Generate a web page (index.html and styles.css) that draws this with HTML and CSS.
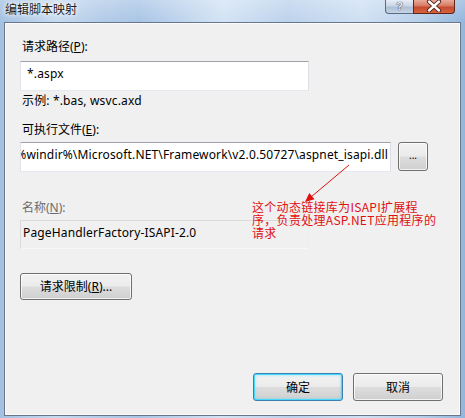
FILE: index.html
```html
<!DOCTYPE html>
<html>
<head>
<meta charset="utf-8">
<link rel="stylesheet" href="styles.css">
</head>
<body>
<div class="window">
  <div class="titlebar">
    <span class="title">编辑脚本映射</span>
    <div class="caption-btns">
      <div class="cap-help">?</div>
      <div class="cap-close">
        <svg width="16" height="12" viewBox="0 0 16 12">
          <path d="M3 1.5 L13 10.5 M13 1.5 L3 10.5" stroke="#4a1a12" stroke-width="4.2" stroke-linecap="round"/>
          <path d="M3 1.5 L13 10.5 M13 1.5 L3 10.5" stroke="#ffffff" stroke-width="2.4" stroke-linecap="round"/>
        </svg>
      </div>
    </div>
  </div>
  <div class="client">
    <div class="label l1">请求路径(<u>P</u>):</div>
    <div class="field f1"><span>*.aspx</span></div>
    <div class="hint">示例: *.bas, wsvc.axd</div>
    <div class="label l2">可执行文件(<u>E</u>):</div>
    <div class="exe-row">
      <div class="field f2"><span>%windir%\Microsoft.NET\Framework\v2.0.50727\aspnet_isapi.dll</span></div>
      <div class="btn browse">...</div>
    </div>
    <div class="label l3 disabled">名称(<u>N</u>):</div>
    <div class="field f3 readonly"><span>PageHandlerFactory-ISAPI-2.0</span></div>
    <div class="btn restrict">请求限制(<u>R</u>)...</div>
    <div class="footer">
      <div class="btn default">确定</div>
      <div class="btn">取消</div>
    </div>
    <div class="note">这个动态链接库为ISAPI扩展程<br>序，负责处理ASP.NET应用程序的<br>请求</div>
  </div>
  <svg class="arrow" width="465" height="418" viewBox="0 0 465 418">
    <line x1="349" y1="165" x2="311" y2="197" stroke="#e01010" stroke-width="1"/>
    <polygon points="305,202 314.5,199.3 309.3,193.1" fill="#e01010"/>
  </svg>
</div>
</body>
</html>
```

FILE: styles.css
```css
html, body {
  margin: 0;
  padding: 0;
}
body {
  width: 465px;
  height: 418px;
  overflow: hidden;
  font-family: "Noto Sans", "Noto Sans CJK SC", sans-serif;
  font-size: 12px;
  color: #000;
}
.window {
  position: relative;
  width: 465px;
  height: 418px;
  display: flex;
  flex-direction: column;
  box-sizing: border-box;
  background:
    linear-gradient(180deg, rgba(255,255,255,0.25) 0px, rgba(255,255,255,0) 22px),
    linear-gradient(90deg, #a3c0e2 0%, #c6daef 12%, #b2cbe8 22%, #a9c5e6 30%, #d3e3f4 48%, #bcd2ec 62%, #cfe0f3 78%, #b7cfea 90%, #93b6dd 100%);
}
.titlebar {
  height: 22px;
  display: flex;
  justify-content: space-between;
  align-items: flex-start;
  padding-left: 5px;
  flex: none;
}
.title {
  font-family: "Noto Sans CJK SC", sans-serif;
  font-size: 12px;
  line-height: 16px;
  margin-top: 1px;
  color: #1b1b1b;
  text-shadow: 0 0 6px #fff, 0 0 3px #fff;
}
.caption-btns {
  display: flex;
  margin-right: 10px;
}
.cap-help {
  width: 28px;
  height: 14px;
  box-sizing: border-box;
  border: 1px solid #5a6b80;
  border-top: none;
  border-right: none;
  border-radius: 0 0 0 4px;
  background: linear-gradient(180deg, #e6edf6 0%, #c9d6e6 45%, #aebfd5 55%, #c6d4e6 100%);
  font-family: "Liberation Sans", sans-serif;
  font-size: 11px;
  font-weight: bold;
  line-height: 12px;
  text-align: center;
  color: #eef3fa;
  text-shadow: 0 0 1px #334, 0 0 1px #334;
}
.cap-close {
  width: 42px;
  height: 14px;
  box-sizing: border-box;
  border: 1px solid #5e2419;
  border-top: none;
  border-radius: 0 0 4px 0;
  background: linear-gradient(180deg, #eaa99a 0%, #d77a62 45%, #c64a30 55%, #d5643f 100%);
  display: flex;
  justify-content: center;
  align-items: flex-start;
}
.cap-close svg {
  display: block;
  margin-top: 0;
}
.client {
  position: relative;
  flex: 1;
  margin: 0 4px 2px 4px;
  border: 1px solid #68788a;
  background: #f0f0f0;
  box-shadow: inset 0 0 0 1px #fafafa;
  padding: 0 17px 0 15px;
  display: flex;
  flex-direction: column;
  align-items: flex-start;
}
.label, .hint {
  font-family: "Noto Sans", "Noto Sans CJK SC", sans-serif;
  line-height: 16px;
  padding-left: 2px;
}
.hint { letter-spacing: 0.15px; }
.l1 { margin-top: 16px; }
.hint { margin-top: 2px; }
.l2 { margin-top: 13px; }
.l3 { margin-top: 28px; }
.disabled { color: #6d6d6d; }
.field {
  box-sizing: border-box;
  height: 30px;
  width: 289px;
  background: #fff;
  border: 1px solid #abadb3;
  border-top-color: #9fa2aa;
  border-bottom-color: #e3e9ef;
  border-right-color: #dbdfe6;
  border-left-color: #e2e3ea;
  display: flex;
  align-items: flex-start;
  overflow: hidden;
  white-space: nowrap;
  line-height: 16px;
  letter-spacing: 0.15px;
  padding: 4px 6px 0 6px;
}
.f1 { margin-top: 6px; }
.exe-row {
  display: flex;
  align-items: flex-start;
  gap: 7px;
  margin-top: 4px;
}
.f2 {
  width: 371px;
  justify-content: flex-end;
  padding: 4px 2px 0 0;
}
.f2 span { flex: none; }
.f3 {
  margin-top: 4px;
  height: 29px;
}
.readonly {
  background: #f0f0f0;
  border: 1px solid #dadada;
  border-bottom-color: #f7f7f7;
  border-right-color: #ededed;
  padding-left: 2px;
}
.btn {
  box-sizing: border-box;
  border: 1px solid #707070;
  border-radius: 3px;
  background: linear-gradient(180deg, #f2f2f2 0%, #ebebeb 48%, #dddddd 52%, #cfcfcf 100%);
  box-shadow: inset 0 0 0 1px rgba(255,255,255,0.75);
  display: flex;
  justify-content: center;
  align-items: center;
  font-family: "Noto Sans CJK SC", "Noto Sans", sans-serif;
  font-size: 12px;
  line-height: 16px;
}
.browse {
  width: 30px;
  height: 29px;
  font-family: "Noto Sans", sans-serif;
  font-size: 10px;
  align-items: flex-end;
  padding-bottom: 7px;
}
.restrict {
  margin-top: 24px;
  width: 112px;
  height: 27px;
  font-family: "Noto Sans", "Noto Sans CJK SC", sans-serif;
}
.footer {
  margin-top: 73px;
  align-self: stretch;
  display: flex;
  justify-content: flex-end;
  gap: 10px;
}
.footer .btn {
  width: 90px;
  height: 28px;
}
.btn.default {
  border-color: #3c7fb1;
  box-shadow: inset 0 0 0 1px #48d8fb, inset 0 0 3px 1px rgba(72,216,251,0.6);
}
.note {
  position: absolute;
  left: 247px;
  top: 177px;
  font-family: "Noto Sans CJK SC", sans-serif;
  font-size: 12px;
  line-height: 13px;
  letter-spacing: 0.3px;
  color: #e01010;
  white-space: nowrap;
}
.arrow {
  position: absolute;
  left: 0;
  top: 0;
  pointer-events: none;
}
```
